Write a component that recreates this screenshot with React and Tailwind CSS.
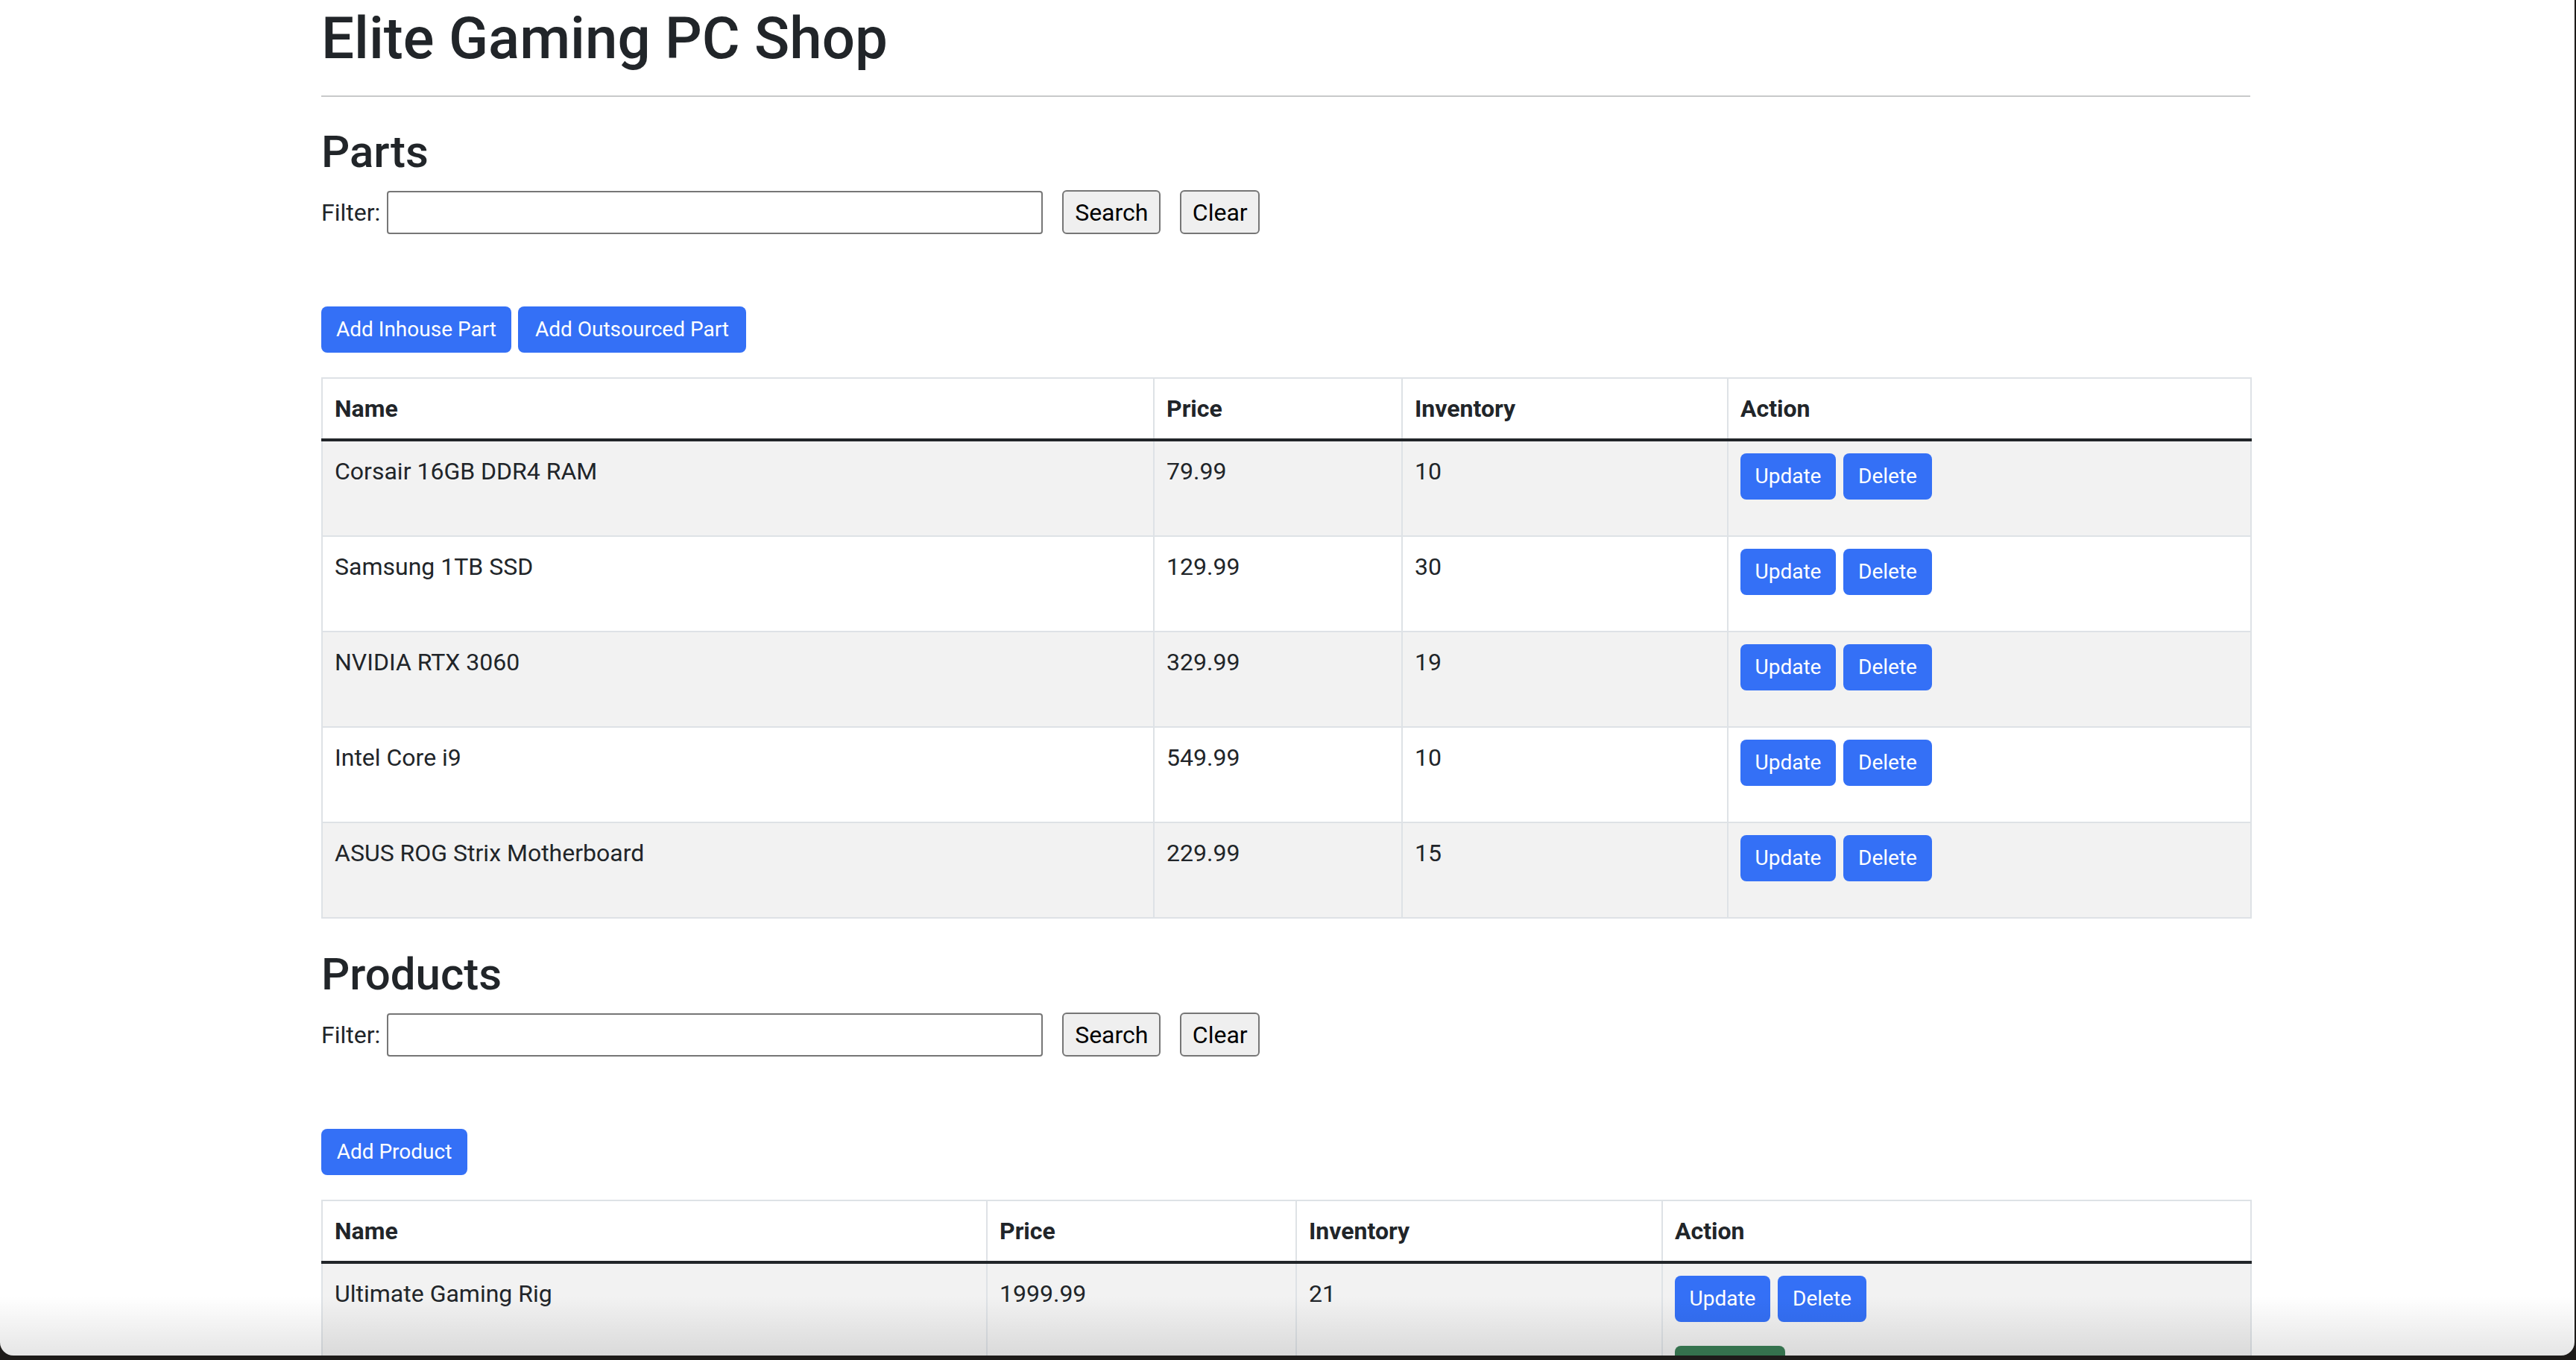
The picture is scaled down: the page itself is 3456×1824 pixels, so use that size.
import React from "react";

const parts = [
  { name: "Corsair 16GB DDR4 RAM", price: "79.99", inv: "10" },
  { name: "Samsung 1TB SSD", price: "129.99", inv: "30" },
  { name: "NVIDIA RTX 3060", price: "329.99", inv: "19" },
  { name: "Intel Core i9", price: "549.99", inv: "10" },
  { name: "ASUS ROG Strix Motherboard", price: "229.99", inv: "15" },
];

const products = [{ name: "Ultimate Gaming Rig", price: "1999.99", inv: "21" }];

const blueBtn =
  "h-[62px] rounded-[8px] bg-[#3470f6] text-white text-[28px] leading-[42px] flex items-center justify-center";

function FilterRow() {
  return (
    <div className="flex items-center h-[59px]">
      <label className="text-[32px] leading-[48px]">Filter:</label>
      <input
        type="text"
        className="ml-[9px] w-[880px] h-[58px] border-2 border-[#767676] rounded-[4px] px-[4px] text-[32px] outline-none bg-white"
      />
      <button className="ml-[26px] w-[132px] h-[59px] bg-[#efefef] border-2 border-[#767676] rounded-[6px] text-[32px] text-black">
        Search
      </button>
      <button className="ml-[26px] w-[107px] h-[59px] bg-[#efefef] border-2 border-[#767676] rounded-[6px] text-[32px] text-black">
        Clear
      </button>
    </div>
  );
}

function RowActions({ extra }) {
  return (
    <div>
      <div className="flex gap-[10px]">
        <button className={`${blueBtn} w-[128px]`}>Update</button>
        <button className={`${blueBtn} w-[119px]`}>Delete</button>
      </div>
      {extra ? (
        <button
          aria-label="Buy Now"
          className="mt-[32px] w-[148px] h-[62px] rounded-[8px] bg-[#3a7d55]"
        />
      ) : (
        <div className="h-[32px]" />
      )}
    </div>
  );
}

function DataTable({ rows, cols, extra }) {
  const cell = "border-2 border-[#dee2e6] px-[16px] py-[16px] text-left align-top";
  return (
    <table className="w-full table-fixed border-collapse text-[32px] leading-[48px]">
      <colgroup>
        {cols.map((w, i) => (
          <col key={i} className={w} />
        ))}
      </colgroup>
      <thead>
        <tr>
          <th className={`${cell} font-bold`}>Name</th>
          <th className={`${cell} font-bold`}>Price</th>
          <th className={`${cell} font-bold`}>Inventory</th>
          <th className={`${cell} font-bold`}>Action</th>
        </tr>
      </thead>
      <tbody className="border-t-4 border-[#212529]">
        {rows.map((r, i) => (
          <tr key={r.name} className={i % 2 === 0 ? "bg-[#f2f2f2]" : "bg-white"}>
            <td className={cell}>{r.name}</td>
            <td className={cell}>{r.price}</td>
            <td className={cell}>{r.inv}</td>
            <td className={cell}>
              <RowActions extra={extra} />
            </td>
          </tr>
        ))}
      </tbody>
    </table>
  );
}

export default function App() {
  return (
    <div className="w-[3456px] h-[1824px] bg-[#1d1b19] overflow-hidden">
      <div className="relative w-[3454px] h-[1818px] bg-white rounded-b-[18px] overflow-hidden font-['Roboto',sans-serif] text-[#212529]">
        <div className="w-[2588px] ml-[431px]">
          {/* Titre */}
          <h1 className="pt-[4px] text-[78px] leading-[95px] font-medium">Elite Gaming PC Shop</h1>
          <hr className="mt-[29px] border-t-2 border-[#c8c9ca]" />

          {/* Parts */}
          <h2 className="mt-[38px] text-[60px] leading-[72px] font-medium">Parts</h2>
          <div className="mt-[15px]">
            <FilterRow />
          </div>
          <div className="mt-[97px] flex gap-[9px]">
            <button className={`${blueBtn} w-[255px]`}>Add Inhouse Part</button>
            <button className={`${blueBtn} w-[306px]`}>Add Outsourced Part</button>
          </div>
          <div className="mt-[33px]">
            <DataTable
              rows={parts}
              cols={["w-[1116px]", "w-[333px]", "w-[437px]", "w-[702px]"]}
            />
          </div>

          {/* Products */}
          <h2 className="mt-[39px] text-[60px] leading-[72px] font-medium">Products</h2>
          <div className="mt-[15px]">
            <FilterRow />
          </div>
          <div className="mt-[97px] flex">
            <button className={`${blueBtn} w-[196px]`}>Add Product</button>
          </div>
          <div className="mt-[33px]">
            <DataTable
              rows={products}
              cols={["w-[892px]", "w-[415px]", "w-[491px]", "w-[790px]"]}
              extra
            />
          </div>
        </div>
        <div className="absolute inset-x-0 bottom-0 h-[80px] bg-linear-to-b from-transparent to-black/[0.1] pointer-events-none" />
      </div>
    </div>
  );
}
